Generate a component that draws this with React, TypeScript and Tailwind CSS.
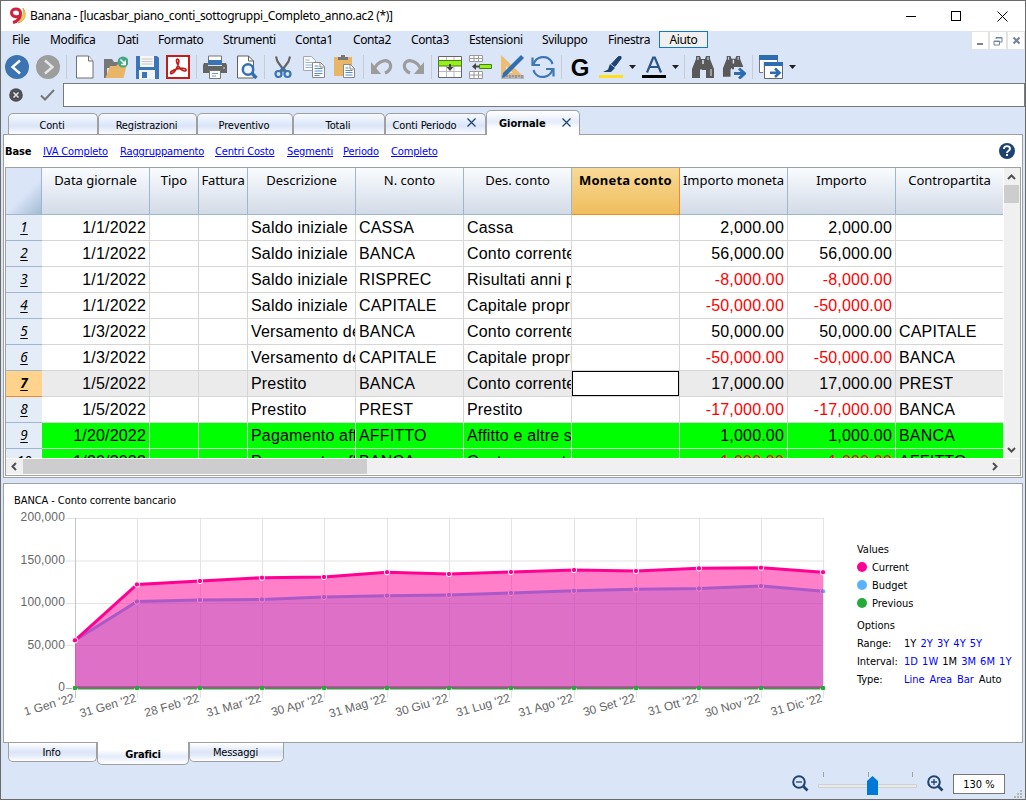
import React from "react";

const seg = "font-['Noto_Sans','Open_Sans',sans-serif]";
const tah = "font-['DejaVu_Sans_Condensed','DejaVu_Sans',sans-serif]";

function Icon({ children, className = "mr-[7px]", w = 24 }: { children: React.ReactNode; className?: string; w?: number }) {
  return (
    <svg width={w} height="24" viewBox={`0 0 ${w} 24`} fill="none" className={`shrink-0 ${className}`}>
      {children}
    </svg>
  );
}

const Sep = () => <div className="-ml-px mr-1.5 h-6 w-px shrink-0 bg-[#c8ccd4]" />;

const Drop = () => (
  <svg width="7" height="4" className="-ml-px mr-1.5 shrink-0">
    <path d="M0 0h7L3.5 4z" fill="#202020" />
  </svg>
);

function Binoculars() {
  return (
    <g fill="#595959">
      <path d="M5 1h4l1 3h4l1-3h4v3l2 5 2 5v9h-8v-8h-6v8H1v-9l2-5 2-5z" />
      <path d="M7 2v3M17 2v3M20 14v7M10 14v5" stroke="#dce6f8" strokeWidth="1" />
      <path d="M12 5v4" stroke="#dce6f8" strokeWidth="1.500" />
    </g>
  );
}

function Toolbar() {
  return (
    <div className="flex h-8 items-center pl-1">
      <Icon>
        <circle cx="12" cy="12" r="12" fill="#3b74b1" />
        <path d="M15 5.5L7.5 12l7.5 6.5" stroke="#fff" strokeWidth="2.4" />
      </Icon>
      <Icon>
        <circle cx="12" cy="12" r="12" fill="#9d9d9d" />
        <path d="M9 5.5l7.5 6.5L9 18.500" stroke="#e6e6e6" strokeWidth="2.4" />
      </Icon>
      <Sep />
      <Icon>
        <path d="M3.500 1h12L20 6v17H3.500z" fill="#fff" stroke="#707070" />
        <path d="M15.500 1v5H20" stroke="#707070" fill="#eee" />
      </Icon>
      <Icon>
        <path d="M0 4h8l2 3h9v6H0z" fill="#777" />
        <path d="M0 12h3v11H0z" fill="#777" />
        <path d="M1.500 23L6 11h6l2-2h9l-3.500 14z" fill="#e9b566" />
        <circle cx="19" cy="7" r="5.500" fill="#43a783" />
        <path d="M16.500 4.500l4.500 4.500M21.200 5.500v4h-4" stroke="#fff" strokeWidth="1.500" />
      </Icon>
      <Icon>
        <path d="M1 1h21l2 2v21H1z" fill="#3b74b8" />
        <path d="M5 1h14v11H5z" fill="#f7f7f7" />
        <path d="M6.500 4h11M6.500 6.500h11M6.500 9h11" stroke="#c4c4c4" />
        <path d="M4 15h16v9H4z" fill="#f4f4f4" />
        <path d="M7 17h5v6H7z" fill="#3b74b8" />
      </Icon>
      <Icon>
        <path d="M1 1h22v22H1z" fill="#fff" stroke="#c31d1b" strokeWidth="2" />
        <path d="M11.500 4c2.500 0 1 6-1 9.500-2 3.500-4.500 6-5.700 5s1.500-3.500 6-4.500 9-.8 9.200.8-2.500 1.700-5-.5C11.500 11 9 4 11.500 4z" stroke="#c31d1b" strokeWidth="1.700" />
      </Icon>
      <Sep />
      <Icon>
        <path d="M5.500 1h13v8h-13z" fill="#fff" stroke="#777" />
        <path d="M5 5h14v5H5z" fill="#3b74b1" />
        <path d="M1 8h4v3h14V8h4l1 2v8H0v-8z" fill="#646464" />
        <path d="M21 12v2" stroke="#ddd" />
        <path d="M6.500 15.500h11v8h-11z" fill="#fff" stroke="#777" />
        <path d="M9 18.500h6M9 21h4" stroke="#7098c8" />
      </Icon>
      <Icon>
        <path d="M3.500 1h11l5 5v17h-16z" fill="#fff" stroke="#606060" />
        <path d="M14.500 1v5h5" stroke="#606060" />
        <circle cx="14" cy="14.500" r="5.200" fill="#eef4fb" stroke="#3270b0" strokeWidth="2.500" />
        <path d="M17.500 18l5 5" stroke="#3270b0" strokeWidth="3.400" />
      </Icon>
      <Sep />
      <Icon>
        <path d="M5 1.500l1.500 5L14 17M19 1.500l-1.500 5L10 17" stroke="#666" strokeWidth="2.200" />
        <circle cx="7.500" cy="19" r="3" stroke="#3b74b1" strokeWidth="2.200" />
        <circle cx="16.500" cy="19" r="3" stroke="#3b74b1" strokeWidth="2.200" />
        <path d="M9 16l3-3 3 3" stroke="#3b74b1" strokeWidth="2" />
      </Icon>
      <Icon>
        <path d="M1.500 1.500h8l4 4v10h-12z" fill="#f7f9fc" stroke="#a4a9b0" />
        <path d="M3.500 5h4M3.500 7.500h7M3.500 10h7M3.500 12.500h7" stroke="#9db4d0" />
        <path d="M10.500 7.500h8l4 4v11h-12z" fill="#fff" stroke="#888" />
        <path d="M18 7.500v4.500h4.500" stroke="#888" />
        <path d="M12.500 11h4M12.500 13.500h8M12.500 16h8M12.500 18.500h8M12.500 20.500h5" stroke="#5b8dca" />
      </Icon>
      <Icon>
        <path d="M1 2h18v19H1z" fill="#e9b566" />
        <path d="M5 2h3V0h4v2h3v3H5z" fill="#777" />
        <path d="M10.500 9.500h7l4 4v9h-11z" fill="#fff" stroke="#888" />
        <path d="M17 9.500v4.500h4.500" stroke="#888" />
        <path d="M12.500 13h3M12.500 15.500h7M12.500 17.500h7M12.500 20h7" stroke="#5b8dca" />
      </Icon>
      <Sep />
      <Icon>
        <path d="M4 14.500C8 5 19 3 20.500 9.500c.8 4-2 7-5.500 8.500" stroke="#9c9c9c" strokeWidth="3.200" />
        <path d="M1 7v12h10z" fill="#9c9c9c" />
      </Icon>
      <Icon>
        <path d="M20 14.500C16 5 5 3 3.500 9.500c-.8 4 2 7 5.500 8.500" stroke="#9c9c9c" strokeWidth="3.200" />
        <path d="M23 7v12H13z" fill="#9c9c9c" />
      </Icon>
      <Sep />
      <Icon>
        <path d="M.5 1.500h23v21H.5z" fill="#fff" stroke="#666" />
        <path d="M8.500 2v20M16 2v20M1 16.500h22" stroke="#bbb" />
        <path d="M.5 5.500h23V11H.5z" fill="#93f01a" stroke="#4b7d19" />
        <path d="M12 9v4" stroke="#444" strokeWidth="2" />
        <path d="M8.500 12h7L12 16z" fill="#444" />
      </Icon>
      <Icon>
        <path d="M.5.500h13v6H.5zM.5 3.500h13M5 .5v6M9.500.5v6M.5 16.500h13v7H.5zM.5 20h13M5 16.500v7M9.500 16.500v7" fill="#fff" stroke="#9a9a9a" />
        <path d="M10.500 9.500h12v4h-12z" fill="#93f01a" stroke="#4b7d19" />
        <path d="M5 11.500h5" stroke="#444" strokeWidth="2" />
        <path d="M7 8v7l-4-3.500z" fill="#444" />
      </Icon>
      <Icon>
        <path d="M1 0l22 21H1z" fill="#edbd71" />
        <path d="M6 11l7 7H6z" fill="#dbe5f8" />
        <path d="M1 20h23v4H1z" fill="#b8b8b8" />
        <path d="M4 20v3M7 20v2M10 20v3M13 20v2M16 20v3M19 20v2M22 20v3" stroke="#777" />
        <path d="M21 0l3 3L6 21l-4 2 1-5z" fill="#2f6eb0" />
      </Icon>
      <Icon>
        <path d="M2.500 9.500C5 1 16-.5 20.500 6.500L21.500 9" stroke="#3c78b5" strokeWidth="2.200" />
        <path d="M1.500 2.500v7.500H9" stroke="#3c78b5" strokeWidth="2.200" />
        <path d="M21.500 14.500C19 23 8 24.500 3.500 17.500L2.500 15" stroke="#3c78b5" strokeWidth="2.200" />
        <path d="M22.500 21.500V14H15" stroke="#3c78b5" strokeWidth="2.200" />
      </Icon>
      <Sep />
      <div className="mr-[7px] flex h-6 w-6 items-center justify-center pt-0.5 font-['Liberation_Sans',sans-serif] text-[24px] leading-6 font-bold text-black">G</div>
      <Icon>
        <path d="M19.500 1.500h2.500v2l-6 8-3.500-2.500z" fill="#1f4370" stroke="#1f4370" />
        <path d="M11 9l5 4-4 4H4l5-2.500z" fill="#1f4370" />
        <path d="M0 20h24v3H0z" fill="#ffe01b" />
      </Icon>
      <Drop />
      <Icon>
        <path d="M5 17.500l6.200-15h1.600l6.200 15M7.500 12h9" stroke="#2a5788" strokeWidth="2.200" />
        <path d="M0 20h24v3H0z" fill="#000" />
      </Icon>
      <Drop />
      <Sep />
      <Icon>
        <Binoculars />
      </Icon>
      <Icon>
        <g transform="scale(.95)">
          <Binoculars />
        </g>
        <path d="M12 12h12v12H12z" fill="#dbe5f8" />
        <path d="M12 18.500h10M17 13.500l5.500 5-5.500 5" stroke="#2d6cb0" strokeWidth="3" />
      </Icon>
      <Sep />
      <Icon>
        <path d="M.5.500h18v17H.5z" fill="#fff" stroke="#777" />
        <path d="M0 0h19v5H0z" fill="#2d6cb0" />
        <path d="M5.500 7.500h18v16h-18z" fill="#fff" stroke="#666" />
        <path d="M4 6h1v12H4z" fill="#dbe5f8" />
        <path d="M5 7h19v4H5z" fill="#2d6cb0" />
        <path d="M11 17.800h8M16 13.500l4.500 4.300-4.500 4.200" stroke="#2d6cb0" strokeWidth="2.600" />
      </Icon>
      <Drop />
    </div>
  );
}

function MenuBar() {
  return (
    <div className={`${seg} flex h-[19px] text-[12px] leading-[18px] tracking-[-0.38px] text-black`}>
      <div className="w-[11px]" />
      <div className="w-[38px]">File</div>
      <div className="w-[67px]">Modifica</div>
      <div className="w-[41px]">Dati</div>
      <div className="w-[65px]">Formato</div>
      <div className="w-[72px]">Strumenti</div>
      <div className="w-[58px]">Conta1</div>
      <div className="w-[58px]">Conta2</div>
      <div className="w-[58px]">Conta3</div>
      <div className="w-[73px]">Estensioni</div>
      <div className="w-[66px]">Sviluppo</div>
      <div className="w-[51px]">Finestra</div>
      <div className="h-[17px] w-[49px] border border-[#0f78d0] bg-[#f0f0f0] text-center leading-[15px]">Aiuto</div>
      <div className="ml-auto flex bg-[#e3e3e3] text-[#75869a]">
        <div className="m-px mr-0 flex h-[17px] w-4 items-center justify-center bg-white">
          <svg width="8" height="9"><path d="M1 7h6v2H1z" fill="currentColor" /></svg>
        </div>
        <div className="m-px ml-0.5 mr-0 flex h-[17px] w-4 items-center justify-center bg-white">
          <svg width="10" height="10" fill="none" stroke="currentColor"><path d="M3 3V1.500h6V6H7M1 5h5.500v4H1zM1 5.500h5.500M3 2h6" /></svg>
        </div>
        <div className="m-px ml-0.5 flex h-[17px] w-4 items-center justify-center bg-white">
          <svg width="9" height="9" stroke="currentColor" strokeWidth="2.200"><path d="M1.500 1.500l6 6M7.500 1.500l-6 6" /></svg>
        </div>
      </div>
    </div>
  );
}

const TabX = ({ className = "" }: { className?: string }) => (
  <svg width="9" height="9" className={`shrink-0 ${className}`} stroke="#1f4370" strokeWidth="1.200"><path d="M.5.500l8 8M8.500.500l-8 8" /></svg>
);

const tabBase =
  "flex h-[21px] items-center justify-center rounded-t-[5px] border-x border-t border-[#a0a0a0] bg-[linear-gradient(#f7faff,#e6eefb_35%,#dbe5f8_60%,#fafcff)] pt-[5px] pr-0.5";

function Tabs() {
  return (
    <div className={`${tah} flex h-6 items-end pl-[7px] text-[11px] tracking-[-0.15px] text-black`}>
      <div className={`${tabBase} w-[90px]`}>Conti</div>
      <div className={`${tabBase} w-[99px]`}>Registrazioni</div>
      <div className={`${tabBase} w-[96px]`}>Preventivo</div>
      <div className={`${tabBase} w-[92px]`}>Totali</div>
      <div className={`${tabBase} w-[101px]`}>
        Conti Periodo
        <TabX className="mb-2 ml-[11px]" />
      </div>
      <div className="relative z-10 -mb-px flex h-[25px] w-[94px] items-center rounded-t-[5px] border-x border-t border-[#a0a0a0] bg-[linear-gradient(#fff,#e4ecfa_45%,#fff_75%)] pt-0.5 pl-3 font-bold tracking-[-0.05px]">
        Giornale
        <TabX className="mr-2 mb-1 ml-auto" />
      </div>
    </div>
  );
}

const headCell =
  "h-[47px] shrink-0 border-r border-b border-[#9fb6cf] bg-[linear-gradient(#f9fcff,#d3dbe8)] pt-[3px] text-center text-[13px] leading-[18px] whitespace-nowrap";

const rows: string[][] = [
  ["1", "1/1/2022", "Saldo iniziale", "CASSA", "Cassa", "2,000.00", ""],
  ["2", "1/1/2022", "Saldo iniziale", "BANCA", "Conto corrente bancario", "56,000.00", ""],
  ["3", "1/1/2022", "Saldo iniziale", "RISPREC", "Risultati anni precedenti", "-8,000.00", ""],
  ["4", "1/1/2022", "Saldo iniziale", "CAPITALE", "Capitale proprio", "-50,000.00", ""],
  ["5", "1/3/2022", "Versamento deposito", "BANCA", "Conto corrente bancario", "50,000.00", "CAPITALE"],
  ["6", "1/3/2022", "Versamento deposito", "CAPITALE", "Capitale proprio", "-50,000.00", "BANCA"],
  ["7", "1/5/2022", "Prestito", "BANCA", "Conto corrente bancario", "17,000.00", "PREST"],
  ["8", "1/5/2022", "Prestito", "PREST", "Prestito", "-17,000.00", "BANCA"],
  ["9", "1/20/2022", "Pagamento affitto", "AFFITTO", "Affitto e altre spese", "1,000.00", "BANCA"],
  ["10", "1/20/2022", "Pagamento affitto", "BANCA", "Conto corrente bancario", "-1,000.00", "AFFITTO"],
];

const cell = "h-[26px] shrink-0 overflow-hidden border-r border-b border-[#d6d6d6] whitespace-nowrap";

function Row({ r }: { r: string[] }) {
  const sel = r[0] === "7";
  const green = Number(r[0]) > 8;
  const bg = sel ? "bg-[#ebebeb]" : green ? "bg-[#00ff00]" : "bg-white";
  const red = r[5].startsWith("-") ? "text-[#ff0000]" : "";
  return (
    <div className={`flex h-[26px] ${bg} text-[16px] leading-[25px] tracking-[0.18px]`}>
      <div
        className={`${seg} h-[26px] w-9 shrink-0 border-b text-center text-[13.500px] leading-[25px] tracking-normal italic underline underline-offset-2 ${
          sel ? "border-[#f08a28] bg-[#ffd38c] font-bold" : "border-[#9fb6cf] bg-[#e4ecf8]"
        }`}
      >
        {r[0]}
      </div>
      <div className={`${cell} w-[108px] pr-[3px] text-right`}>{r[1]}</div>
      <div className={`${cell} w-[49px]`} />
      <div className={`${cell} w-[49px]`} />
      <div className={`${cell} w-[108px] pl-[3px]`}>{r[2]}</div>
      <div className={`${cell} w-[108px] pl-[3px]`}>{r[3]}</div>
      <div className={`${cell} w-[108px] pl-[3px]`}>{r[4]}</div>
      <div className={`${cell} w-[108px]`}>{sel && <div className="h-[25px] w-[107px] border border-black bg-white" />}</div>
      <div className={`${cell} w-[108px] pr-[3px] text-right ${red}`}>{r[5]}</div>
      <div className={`${cell} w-[108px] pr-[3px] text-right ${red}`}>{r[5]}</div>
      <div className={`${cell} w-[107px] border-r-0 pl-[3px]`}>{r[6]}</div>
    </div>
  );
}

function Table() {
  return (
    <div className="ml-px flex h-[309px] w-[1016px] flex-col border border-[#a0a0a0] bg-[#f0f0f0] font-['Liberation_Sans',sans-serif] text-black">
      <div className="flex h-[290px] shrink-0">
        <div className="flex w-[998px] flex-col overflow-hidden border-r border-white">
          <div className={`${seg} flex h-[47px] shrink-0`}>
            <div className="w-9 shrink-0 border-r border-b border-[#9fb6cf] bg-[linear-gradient(135deg,#dbe5f8_55%,#a3bbd2)]" />
            <div className={`${headCell} w-[108px]`}>Data giornale</div>
            <div className={`${headCell} w-[49px]`}>Tipo</div>
            <div className={`${headCell} w-[49px] tracking-[-0.1px]`}>Fattura</div>
            <div className={`${headCell} w-[108px]`}>Descrizione</div>
            <div className={`${headCell} w-[108px]`}>N. conto</div>
            <div className={`${headCell} w-[108px]`}>Des. conto</div>
            <div className="h-[47px] w-[108px] shrink-0 border-r border-b border-[#f08a28] bg-[linear-gradient(#f8d997,#efbe5c)] pt-[3px] text-center text-[13px] leading-[18px] font-bold tracking-[0.2px] whitespace-nowrap">
              Moneta conto
            </div>
            <div className={`${headCell} w-[108px]`}>Importo moneta</div>
            <div className={`${headCell} w-[108px]`}>Importo</div>
            <div className={`${headCell} w-[107px] border-r-0`}>Contropartita</div>
          </div>
          <div className="h-[243px] overflow-hidden">
            {rows.map((r) => (
              <Row key={r[0]} r={r} />
            ))}
          </div>
        </div>
        <div className="flex w-[15px] flex-col items-center">
          <svg width="9" height="17" fill="none" stroke="#505050" strokeWidth="2"><path d="M1 11l3.500-3.500L8 11" /></svg>
          <div className="h-[18px] w-[15px] bg-[#cdcdcd]" />
          <svg width="9" height="17" className="mt-auto" fill="none" stroke="#505050" strokeWidth="2"><path d="M1 7l3.500 3.500L8 7" /></svg>
        </div>
      </div>
      <div className="flex h-[17px] items-center border-y border-white">
        <svg width="17" height="15" fill="none" stroke="#505050" strokeWidth="2"><path d="M10 4L6.500 7.500 10 11" /></svg>
        <div className="h-[15px] w-[344px] bg-[#cdcdcd]" />
        <svg width="17" height="15" className="mr-[17px] ml-auto" fill="none" stroke="#505050" strokeWidth="2"><path d="M7 4l3.500 3.500L7 11" /></svg>
      </div>
    </div>
  );
}

const xs = [75, 137, 200, 262, 324, 387, 449, 511, 574, 636, 699, 761, 823];
const current = [640.3, 584.5, 581, 577.7, 577, 572.2, 574, 572, 570, 571, 568.3, 567.7, 572.2];
const budget = [640.3, 601.6, 600, 599.5, 597, 595.7, 595, 593, 590.7, 589.2, 588.5, 586, 591.3];
const months = ["1 Gen", "31 Gen", "28 Feb", "31 Mar", "30 Apr", "31 Mag", "30 Giu", "31 Lug", "31 Ago", "30 Set", "31 Ott", "30 Nov", "31 Dic"];
const line = (ys: number[]) => xs.map((x, i) => `${x},${ys[i]}`).join(" ");

function Series({ ys, color, opacity }: { ys: number[]; color: string; opacity: number }) {
  return (
    <g>
      <polygon points={`75,688 ${line(ys)} 823,688`} fill={color} fillOpacity={opacity} />
      <polyline points={line(ys)} fill="none" stroke={color} strokeWidth="3" />
      {xs.map((x, i) => (
        <circle key={x} cx={x} cy={ys[i]} r="2.700" fill={color} stroke="#fff" strokeWidth="1" />
      ))}
    </g>
  );
}

function Chart() {
  return (
    <svg width="848" height="226" viewBox="4 510 848 226" className="block font-['Liberation_Sans',sans-serif]" fontSize="12" fill="#666">
      {[518.5, 561, 603.5, 645.5].map((y) => (
        <path key={y} d={`M66 ${y}H823`} stroke="#e3e3e3" />
      ))}
      {xs.map((x, i) => (
        <path key={x} d={`M${x + 0.5} 518V698`} stroke={i ? "#e3e3e3" : "#c4c4c4"} />
      ))}
      <path d="M66 688.500H823" stroke="#b0b0b0" />
      <Series ys={xs.map(() => 688)} color="#22ab38" opacity={0} />
      <Series ys={budget} color="#59b2ff" opacity={0.4} />
      <polygon points={`75,688 ${line(current)} 823,688`} fill="#ff0092" fillOpacity=".5" />
      <Series ys={current} color="#ff0092" opacity={0} />
      <path d="M76 687.500H823" stroke="#975c82" strokeWidth="2" />
      {xs.map((x) => (
        <circle key={x} cx={x} cy="688" r="2.200" fill="#22ab38" />
      ))}
      {["200,000", "150,000", "100,000", "50,000", "0"].map((t, i) => (
        <text key={t} x="65" y={521.300 + i * 42.400} textAnchor="end" letterSpacing=".15">
          {t}
        </text>
      ))}
      {xs.map((x, i) => (
        <text key={x} transform={`translate(${x} 701.500) rotate(-16)`} textAnchor="end">
          {months[i]} '22
        </text>
      ))}
    </svg>
  );
}

function Legend() {
  return (
    <div className={`${tah} pt-8 text-[11px] leading-[18px] tracking-[-0.05px] text-black`}>
      <div>Values</div>
      <div className="flex items-center gap-[5px]"><i className="mb-0.5 h-2.5 w-2.5 rounded-full bg-[#ff0092]" />Current</div>
      <div className="flex items-center gap-[5px]"><i className="mb-0.5 h-2.5 w-2.5 rounded-full bg-[#59b2ff]" />Budget</div>
      <div className="flex items-center gap-[5px]"><i className="mb-0.5 h-2.5 w-2.5 rounded-full bg-[#22ab38]" />Previous</div>
      <div className="mt-1">Options</div>
      <div className="flex">
        <div className="w-[47px]">Range:</div>
        <div className="flex gap-1 tracking-[0.05px] text-[#0000ff]"><span className="text-black">1Y</span><span>2Y</span><span>3Y</span><span>4Y</span><span>5Y</span></div>
      </div>
      <div className="flex">
        <div className="w-[47px]">Interval:</div>
        <div className="flex gap-1 tracking-[0.05px] text-[#0000ff]"><span>1D</span><span>1W</span><span className="text-black">1M</span><span>3M</span><span>6M</span><span>1Y</span></div>
      </div>
      <div className="flex">
        <div className="w-[47px]">Type:</div>
        <div className="flex gap-[5px] text-[#0000ff]"><span>Line</span><span>Area</span><span>Bar</span><span className="text-black">Auto</span></div>
      </div>
    </div>
  );
}

const Magnifier = ({ plus }: { plus?: boolean }) => (
  <svg width="17" height="17" fill="none" stroke="#1f4370" className="shrink-0">
    <circle cx="7" cy="7" r="5.800" strokeWidth="2" />
    <path d="M11.500 11.500l4 4" strokeWidth="2.600" />
    <path d={plus ? "M4 7h6M7 4v6" : "M4 7h6"} strokeWidth="1.300" />
  </svg>
);

const bottomTab =
  "h-[19px] rounded-b-[5px] border-x border-b border-[#a0a0a0] bg-[linear-gradient(#fff,#dbe5f8_50%,#e3ebfa_70%,#fff)] pr-0.5 text-center leading-[19px]";

const link = "text-[#0000ff] underline";

export default function App() {
  return (
    <div className="h-[801px] w-[1026px] overflow-hidden bg-white">
      <div className="flex h-[800px] w-[1026px] flex-col border border-[#6b6b6b] bg-[#dbe5f8]">
        <div className="flex h-[30px] items-center bg-white">
          <svg width="18" height="18" className="mr-[3px] ml-2" fill="none">
            <path d="M14 1c4 5 3 13-5 15 4-4 6-9 5-15z" fill="#f3d94a" stroke="#b89a35" strokeWidth=".7" />
            <path d="M11.500 8.500C8 11 2.500 9.500 2.500 5.700 2.500 1 11.500 0 11.500 6.500c0 5-3 8-7.500 9" stroke="#d21f3c" strokeWidth="3" />
          </svg>
          <div className={`${seg} text-[12px] tracking-[-0.34px] text-black`}>Banana - [lucasbar_piano_conti_sottogruppi_Completo_anno.ac2 (*)]</div>
          <div className="ml-auto flex items-center pr-[17px]">
            <div className="h-px w-2.5 bg-black" />
            <div className="ml-[35px] h-2.5 w-2.5 border border-black" />
            <svg width="11" height="11" className="ml-9" stroke="#000"><path d="M.5.500l10 10M10.500.500l-10 10" /></svg>
          </div>
        </div>
        <MenuBar />
        <div className="h-px" />
        <Toolbar />
        <div className="flex h-6 items-stretch">
          <div className="flex w-[62px] items-center">
            <svg width="14" height="14" className="ml-2">
              <circle cx="7" cy="7" r="6.800" fill="#505050" />
              <path d="M4.500 4.500l5 5M9.500 4.500l-5 5" stroke="#dbe5f8" strokeWidth="1.500" />
            </svg>
            <svg width="15" height="12" className="ml-[17px]" fill="none" stroke="#777" strokeWidth="2"><path d="M1 6.500L5 10.500 14 1" /></svg>
          </div>
          <div className="h-6 w-[962px] border border-[#777b80] bg-white" />
        </div>
        <div className="h-[3px]" />
        <Tabs />
        <div className="ml-0.5 h-[344px] w-[1020px] shrink-0 border border-[#a0a0a0] bg-white">
          <div className={`${tah} flex h-8 items-center pl-px text-[11px] tracking-[-0.14px]`}>
            <div className="w-[38px] pt-[3px] font-bold tracking-[-0.15px] text-black">Base</div>
            <div className="w-[77px] pt-[3px]"><span className={link}>IVA Completo</span></div>
            <div className="w-[95px] pt-[3px]"><span className={link}>Raggruppamento</span></div>
            <div className="w-[72px] pt-[3px]"><span className={link}>Centri Costo</span></div>
            <div className="w-[56px] pt-[3px]"><span className={link}>Segmenti</span></div>
            <div className="w-[48px] pt-[3px]"><span className={link}>Periodo</span></div>
            <div className="pt-[3px]"><span className={link}>Completo</span></div>
            <svg width="16" height="16" className="mr-[7px] ml-auto">
              <circle cx="8" cy="8" r="8" fill="#1f4370" />
              <path d="M5 6c0-4 6-3.500 6-.3 0 2-3 2-3 4.300M8 11v2" fill="none" stroke="#fff" strokeWidth="1.900" />
            </svg>
          </div>
          <Table />
        </div>
        <div className="h-[5px] shrink-0" />
        <div className="ml-0.5 flex h-[260px] w-[1020px] shrink-0 border border-[#a0a0a0] bg-white">
          <div className="w-[853px]">
            <div className={`${tah} h-[26px] pt-[9px] pl-2.5 text-[11px] tracking-[-0.08px] text-black`}>BANCA - Conto corrente bancario</div>
            <Chart />
          </div>
          <div className="pt-[25px]"><Legend /></div>
        </div>
        <div className={`${tah} flex h-[23px] shrink-0 items-start pl-[7px] text-[11px] tracking-[-0.15px] text-black`}>
          <div className={`${bottomTab} w-[89px]`}>Info</div>
          <div className="-mt-px h-[23px] w-[92px] rounded-b-[5px] border-x border-b border-[#a0a0a0] bg-[linear-gradient(#fff_35%,#e4ecfa_65%,#fff)] text-center leading-[25px] font-bold">Grafici</div>
          <div className={`${bottomTab} w-[95px]`}>Messaggi</div>
        </div>
        <div className="flex min-h-0 grow items-start pt-[5px]">
          <div className="ml-[791px] flex h-6 items-center"><Magnifier /></div>
          <svg width="100" height="28" className="mt-0 ml-[9px]">
            <path d="M5.500 1v5M50.500 1v5M94.500 1v5" stroke="#a0a0a0" />
            <path d="M.5 13.500h98v3H.5z" fill="#e7eaea" stroke="#d0d0d0" />
            <path d="M49 10l5.500-5 5.500 5v14H49z" fill="#0078d7" />
          </svg>
          <div className="ml-[9px] flex h-6 items-center"><Magnifier plus /></div>
          <div className={`${tah} mt-[3px] ml-[9px] h-5 w-[52px] border border-[#777] bg-white text-center text-[11px] leading-[20px] text-black`}>130 %</div>
          <svg width="9" height="9" className="mt-[19px] ml-[9px]" fill="#b4b4b4"><path d="M6 0h2v2H6zM3 3h2v2H3zM6 3h2v2H6zM0 6h2v2H0zM3 6h2v2H3zM6 6h2v2H6z" /></svg>
        </div>
      </div>
    </div>
  );
}
